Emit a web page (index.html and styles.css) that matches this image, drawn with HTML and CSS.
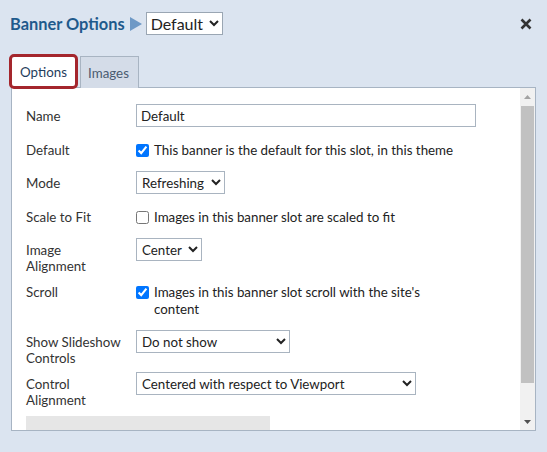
FILE: index.html
```html
<!DOCTYPE html>
<html lang="en">
<head>
<meta charset="utf-8">
<title>Banner Options</title>
<link rel="stylesheet" href="styles.css">
</head>
<body>
<div class="dialog">
  <div class="header">
    <h1 class="title">Banner Options</h1>
    <svg class="crumb" width="14" height="14" viewBox="0 0 14 14"><polygon points="1,0 13,7 1,14" fill="#6e99c6"/></svg>
    <select class="head-select"><option>Default</option></select>
    <button class="close" aria-label="Close">
      <svg width="12" height="12" viewBox="0 0 12 12"><path d="M1.5 1.5 L10.5 10.5 M10.5 1.5 L1.5 10.5" stroke="#333" stroke-width="2.6" stroke-linecap="butt"/></svg>
    </button>
  </div>
  <div class="tabs">
    <div class="tab active">Options</div>
    <div class="tab">Images</div>
  </div>
  <div class="panel">
    <div class="content">
      <div class="row">
        <div class="label">Name</div>
        <input class="text" type="text" value="Default">
      </div>
      <div class="row">
        <div class="label">Default</div>
        <label class="check"><input type="checkbox" checked><span>This banner is the default for this slot, in this theme</span></label>
      </div>
      <div class="row">
        <div class="label">Mode</div>
        <select class="sel w-mode"><option>Refreshing</option></select>
      </div>
      <div class="row">
        <div class="label">Scale to Fit</div>
        <label class="check"><input type="checkbox"><span>Images in this banner slot are scaled to fit</span></label>
      </div>
      <div class="row">
        <div class="label">Image Alignment</div>
        <select class="sel w-center"><option>Center</option></select>
      </div>
      <div class="row">
        <div class="label">Scroll</div>
        <label class="check"><input type="checkbox" checked><span>Images in this banner slot scroll with the site's content</span></label>
      </div>
      <div class="row">
        <div class="label">Show Slideshow Controls</div>
        <select class="sel w-show"><option>Do not show</option></select>
      </div>
      <div class="row">
        <div class="label">Control Alignment</div>
        <select class="sel w-ctrl"><option>Centered with respect to Viewport</option></select>
      </div>
      <button class="action">MAKE THIS BANNER INACTIVE</button>
    </div>
    <div class="scrollbar">
      <div class="sb-btn"><svg width="7" height="4" viewBox="0 0 7 4"><polygon points="3.5,0 7,4 0,4" fill="#a3a3a3"/></svg></div>
      <div class="sb-thumb"></div>
      <div class="sb-track"></div>
      <div class="sb-btn"><svg width="7" height="4" viewBox="0 0 7 4"><polygon points="0,0 7,0 3.5,4" fill="#505050"/></svg></div>
    </div>
  </div>
</div>
</body>
</html>
```

FILE: styles.css
```css
* { box-sizing: border-box; }
html, body { margin: 0; padding: 0; }
body {
  background: #dbe4f0;
  font-family: Lato, "Noto Sans", sans-serif;
  color: #333;
  width: 547px;
  height: 452px;
  overflow: hidden;
}
.dialog {
  padding: 12px 11px 0 11px;
}
.header {
  display: flex;
  align-items: center;
  height: 23px;
}
.title {
  margin: 0 0 0 -1px;
  font-size: 16.4px;
  font-weight: 700;
  color: #1f5a8c;
  line-height: 23px;
}
.crumb {
  margin-left: 4px;
  margin-right: 3px;
}
.head-select {
  width: 77px;
  height: 23px;
  font-family: Lato, sans-serif;
  font-size: 16px;
  color: #222;
  background: #fff;
  border: 1px solid #9aa6b3;
  border-radius: 0;
  padding: 0;
}
.close {
  margin-left: auto;
  margin-right: 4px;
  border: 0;
  background: transparent;
  padding: 0;
  width: 12px;
  height: 12px;
  display: flex;
}
.tabs {
  display: flex;
  align-items: flex-end;
  gap: 2px;
  margin-top: 19px;
  margin-left: -2px;
  position: relative;
  z-index: 1;
  margin-bottom: -2px;
}
.tab {
  font-size: 13.33px;
  line-height: 16px;
}
.tab.active {
  width: 69px;
  height: 35px;
  background: #fff;
  border: 3px solid #a4262d;
  border-radius: 5px;
  color: #1f3d5c;
  display: flex;
  align-items: center;
  justify-content: center;
  padding-top: 1px;
}
.tab:not(.active) {
  width: 59px;
  height: 32px;
  margin-bottom: 1px;
  background: #d4dce8;
  border: 1px solid #a8b4c2;
  border-bottom: 0;
  color: #4a5b70;
  display: flex;
  align-items: center;
  justify-content: center;
  padding-right: 2px;
}
.panel {
  display: flex;
  height: 344px;
  background: #fff;
  border: 1px solid #a7b4c3;
}
.content {
  flex: 1;
  overflow: hidden;
  padding: 16px 14px 0 14px;
}
.scrollbar {
  width: 15px;
  flex: none;
  background: #f1f1f1;
  display: flex;
  flex-direction: column;
  align-items: center;
}
.sb-btn {
  height: 17px;
  width: 15px;
  display: flex;
  align-items: center;
  justify-content: center;
}
.sb-thumb {
  width: 13px;
  height: 277px;
  margin-top: 1px;
  background: #c1c1c1;
}
.sb-track { flex: 1; }
.row {
  display: flex;
  align-items: flex-start;
  margin-bottom: 6px;
}
.label {
  width: 96.5px;
  flex: none;
  margin-right: 13.5px;
  padding-top: 4px;
  font-size: 13.33px;
  line-height: 16px;
  color: #333;
}
.text {
  width: 340px;
  height: 23px;
  margin: 0 0 5px 0;
  border: 1px solid #a9b4c0;
  border-radius: 0;
  padding: 0 4px;
  font-family: Lato, sans-serif;
  font-size: 13.33px;
  color: #222;
}
.check {
  display: flex;
  align-items: flex-start;
  max-width: 325px;
  padding-top: 4px;
  margin-bottom: 6px;
  font-size: 13.33px;
  line-height: 17px;
  color: #222;
}
.check input {
  width: 13px;
  height: 13px;
  margin: 2px 5px 0 0;
  flex: none;
}
.sel {
  height: 23px;
  margin: 0 0 5px 0;
  border: 1px solid #a9b4c0;
  border-radius: 0;
  background: #fff;
  font-family: Lato, sans-serif;
  font-size: 13.33px;
  color: #222;
  padding: 0 0 0 1px;
}
.w-mode { width: 89px; }
.w-center { width: 66px; }
.w-show { width: 154px; }
.w-ctrl { width: 280px; }
.action {
  display: block;
  margin-top: 8px;
  width: 244px;
  height: 38px;
  border: 0;
  background: #e6e6e6;
  color: #c8c8c8;
  font-family: Lato, sans-serif;
  font-size: 13.33px;
  font-weight: 700;
  letter-spacing: 1px;
}
```
